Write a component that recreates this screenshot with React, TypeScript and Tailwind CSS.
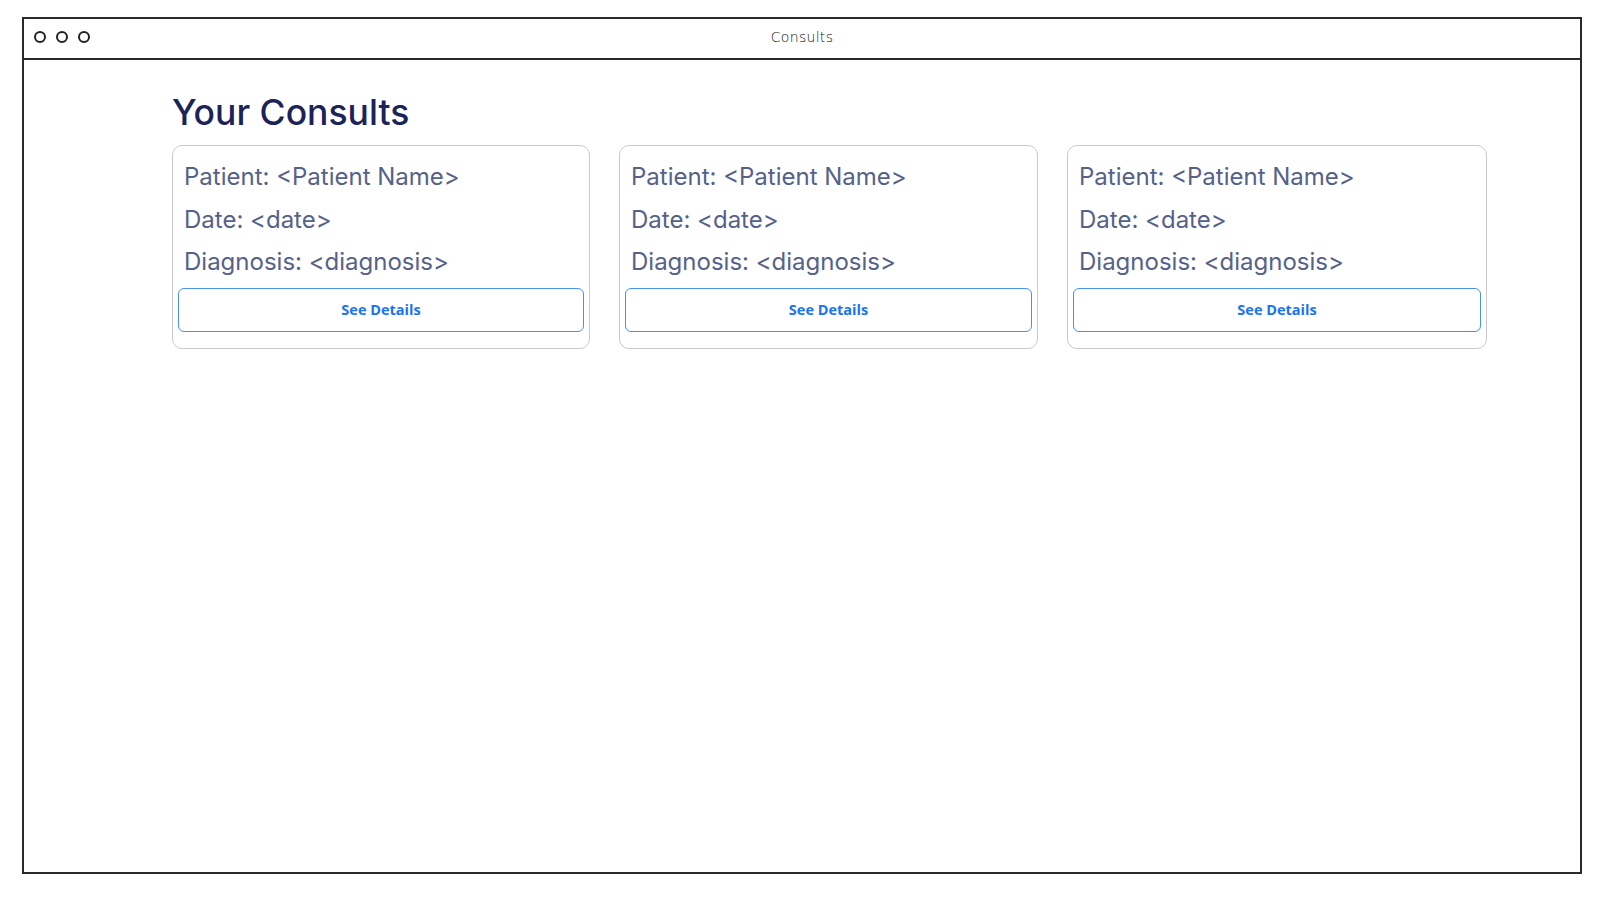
import React from "react";

function Card() {
  return (
    <div className="flex flex-col rounded-[10px] border border-[#c9c9c9] bg-white pt-[10px] pb-[16px] px-[5px]">
      <div className="px-[6px] text-[24px] leading-[42.5px] text-[#56618a]" style={{ fontFamily: "Inter, 'Noto Sans', sans-serif" }}>
        <div>Patient: &lt;Patient Name&gt;</div>
        <div>Date: &lt;date&gt;</div>
        <div>Diagnosis: &lt;diagnosis&gt;</div>
      </div>
      <button
        className="mt-[4px] h-[44px] w-full rounded-[6px] border border-[#4a90f0] bg-white text-[14.5px] font-bold text-[#1a73f0]"
        style={{ fontFamily: "'Open Sans', 'Noto Sans', sans-serif" }}
      >
        See Details
      </button>
    </div>
  );
}

export default function App() {
  return (
    <div className="h-[908px] w-[1618px] bg-white pl-[22px] pt-[17px]">
      <div className="flex h-[857px] w-[1560px] flex-col border-2 border-[#2a2a2a]">
        <div className="relative flex h-[41px] shrink-0 items-center border-b-2 border-[#2a2a2a] pl-[10px]">
          <div className="-mt-[4px] flex gap-[10px]">
            <div className="h-[12px] w-[12px] rounded-full border-2 border-[#222]" />
            <div className="h-[12px] w-[12px] rounded-full border-2 border-[#222]" />
            <div className="h-[12px] w-[12px] rounded-full border-2 border-[#222]" />
          </div>
          <div
            className="absolute left-0 right-0 top-[8px] text-center text-[14px] tracking-[0.3px] text-[#111]"
            style={{ fontFamily: "'DejaVu Sans', sans-serif", fontWeight: 300 }}
          >
            Consults
          </div>
        </div>
        <div className="pl-[148px] pt-[33px]">
          <h1
            className="text-[35.5px] font-medium leading-[40px] text-[#1b2358]"
            style={{ fontFamily: "Inter, 'Noto Sans', sans-serif" }}
          >
            Your Consults
          </h1>
          <div className="mt-[12px] grid w-[1315px] grid-cols-[418px_419px_420px] gap-[29px]">
            <Card />
            <Card />
            <Card />
          </div>
        </div>
      </div>
    </div>
  );
}
